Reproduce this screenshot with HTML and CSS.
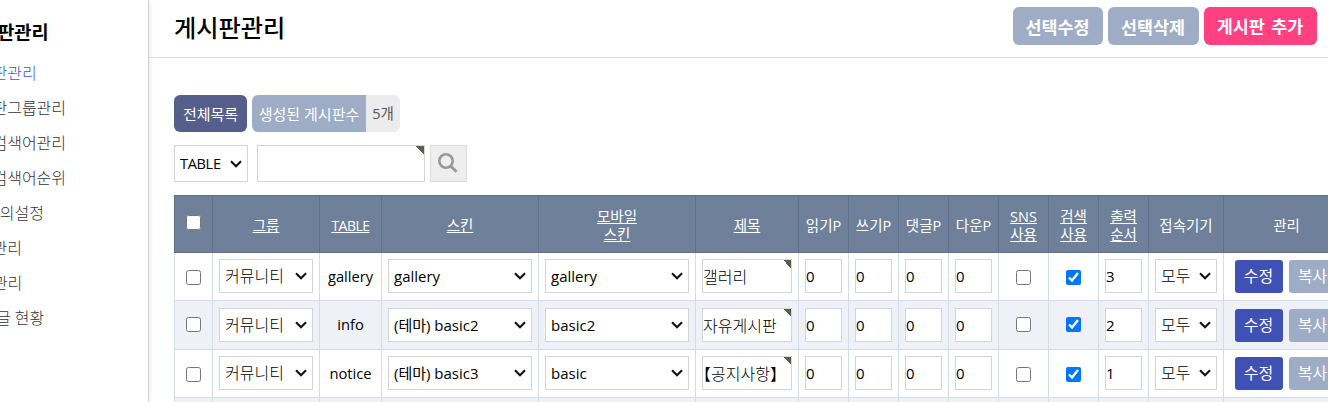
FILE: index.html
```
<!DOCTYPE html>
<html lang="ko">
<head>
  <meta charset="UTF-8">
  <title>게시판관리</title>
  <link rel="stylesheet" href="styles.css">
</head>
<body>

  <!-- Left menu -->
  <nav class="sidebar">
    <h2>게시판관리</h2>
    <ul>
      <li class="on">게시판관리</li>
      <li>게시판그룹관리</li>
      <li>인기검색어관리</li>
      <li>인기검색어순위</li>
      <li>1:1문의설정</li>
      <li>내용관리</li>
      <li>FAQ관리</li>
      <li>글,댓글 현황</li>
    </ul>
  </nav>

  <main class="content">
    <header class="top">
      <h1>게시판관리</h1>
      <div class="top-btns">
        <button class="btn edit">선택수정</button>
        <button class="btn delete">선택삭제</button>
        <button class="btn add">게시판 추가</button>
      </div>
    </header>

    <div class="overview">
      <a class="list-all">전체목록</a>
      <span class="count"><span class="count-txt">생성된 게시판수</span><span class="count-num">5개</span></span>
    </div>

    <form class="search">
      <select class="field"><option>TABLE</option></select>
      <input type="text" class="keyword required">
      <button type="button" class="search-btn">
        <svg width="20" height="20" viewBox="0 0 20 20" fill="none" stroke="#999">
          <circle cx="8" cy="8" r="6.7" stroke-width="2.6"/>
          <path d="M12.8 13.2L18.5 18.8" stroke-width="3"/>
        </svg>
      </button>
    </form>

    <table>
      <colgroup>
        <col class="w-chk"><col class="w-group"><col class="w-table"><col class="w-skin"><col class="w-skin"><col class="w-title">
        <col class="w-num"><col class="w-num"><col class="w-num"><col class="w-num"><col class="w-num"><col class="w-num"><col class="w-num">
        <col class="w-device"><col class="w-mng">
      </colgroup>
      <thead>
        <tr>
          <th class="th-chk"><input type="checkbox"></th>
          <th><u>그룹</u></th>
          <th class="en"><u>TABLE</u></th>
          <th><u>스킨</u></th>
          <th><u>모바일<br>스킨</u></th>
          <th><u>제목</u></th>
          <th>읽기P</th>
          <th>쓰기P</th>
          <th>댓글P</th>
          <th>다운P</th>
          <th><u>SNS<br>사용</u></th>
          <th><u>검색<br>사용</u></th>
          <th><u>출력<br>순서</u></th>
          <th>접속기기</th>
          <th>관리</th>
        </tr>
      </thead>
      <tbody>
        <tr>
          <td class="chk"><input type="checkbox"></td>
          <td><select><option>커뮤니티</option></select></td>
          <td class="name">gallery</td>
          <td><select class="en"><option>gallery</option></select></td>
          <td><select class="en"><option>gallery</option></select></td>
          <td><input type="text" class="required" value="갤러리"></td>
          <td><input type="text" value="0"></td>
          <td><input type="text" value="0"></td>
          <td><input type="text" value="0"></td>
          <td><input type="text" value="0"></td>
          <td class="chk"><input type="checkbox"></td>
          <td class="chk"><input type="checkbox" checked></td>
          <td><input type="text" value="3"></td>
          <td><select><option>모두</option></select></td>
          <td><div class="mng"><a class="modify">수정</a><a class="copy">복사</a></div></td>
        </tr>
        <tr>
          <td class="chk"><input type="checkbox"></td>
          <td><select><option>커뮤니티</option></select></td>
          <td class="name">info</td>
          <td><select class="en"><option>(테마) basic2</option></select></td>
          <td><select class="en"><option>basic2</option></select></td>
          <td><input type="text" class="required" value="자유게시판"></td>
          <td><input type="text" value="0"></td>
          <td><input type="text" value="0"></td>
          <td><input type="text" value="0"></td>
          <td><input type="text" value="0"></td>
          <td class="chk"><input type="checkbox"></td>
          <td class="chk"><input type="checkbox" checked></td>
          <td><input type="text" value="2"></td>
          <td><select><option>모두</option></select></td>
          <td><div class="mng"><a class="modify">수정</a><a class="copy">복사</a></div></td>
        </tr>
        <tr>
          <td class="chk"><input type="checkbox"></td>
          <td><select><option>커뮤니티</option></select></td>
          <td class="name">notice</td>
          <td><select class="en"><option>(테마) basic3</option></select></td>
          <td><select class="en"><option>basic</option></select></td>
          <td><input type="text" class="required" value="【공지사항】"></td>
          <td><input type="text" value="0"></td>
          <td><input type="text" value="0"></td>
          <td><input type="text" value="0"></td>
          <td><input type="text" value="0"></td>
          <td class="chk"><input type="checkbox"></td>
          <td class="chk"><input type="checkbox" checked></td>
          <td><input type="text" value="1"></td>
          <td><select><option>모두</option></select></td>
          <td><div class="mng"><a class="modify">수정</a><a class="copy">복사</a></div></td>
        </tr>
        <tr>
          <td></td><td></td><td></td><td></td><td></td><td></td><td></td><td></td>
          <td></td><td></td><td></td><td></td><td></td><td></td><td></td>
        </tr>
      </tbody>
    </table>
  </main>

</body>
</html>
```
FILE: styles.css
```
* {
  box-sizing: border-box;
}

body {
  margin: 0;
  height: 402px;
  display: flex;
  overflow: hidden;
  background: #fff;
  color: #000;
  font-family: "Open Sans", "Noto Sans CJK KR", sans-serif;
  font-size: 15px;
}

input,
select,
button {
  font-family: inherit;
}

/* left menu */
.sidebar {
  flex: none;
  width: 149px;
  border-right: 1px solid #d5d5d5;
  box-shadow: 0 0 5px rgba(0, 0, 0, 0.12);
  white-space: nowrap;
}

.sidebar h2 {
  margin: 19px 0 11px -37px;
  font-size: 18.6px;
  line-height: 26px;
}

.sidebar ul {
  margin: 0 0 0 -37px;
  padding: 0;
  list-style: none;
}

.sidebar li {
  height: 35px;
  line-height: 35px;
  font-size: 16px;
  font-weight: 300;
  color: #333;
}

.sidebar .on {
  color: #3f51f5;
}

/* top bar */
.content {
  flex: 1;
  min-width: 0;
  height: 402px;
  overflow: hidden;
}

.top {
  display: flex;
  justify-content: space-between;
  align-items: flex-start;
  height: 58px;
  padding: 7px 11px 0 25px;
  border-bottom: 1px solid #ddd;
}

.top h1 {
  margin: 0;
  font-size: 24.2px;
  font-weight: 500;
  line-height: 42px;
}

.top-btns {
  display: flex;
  gap: 5px;
}

.btn {
  height: 38px;
  padding: 0 1px 0 0;
  border: 0;
  border-radius: 6px;
  background: #9eacc6;
  color: #fff;
  font-size: 17.4px;
  font-weight: bold;
}

.edit {
  width: 90px;
}

.delete {
  width: 91px;
}

.add {
  width: 113px;
  padding-bottom: 1px;
  background: #ff4081;
  word-spacing: 2px;
}

/* list summary */
.overview {
  display: flex;
  gap: 5px;
  margin: 37px 0 0 25px;
  height: 37px;
  line-height: 38px;
  text-align: center;
  color: #fff;
}

.list-all {
  width: 73px;
  border-radius: 6px;
  background: #565e8b;
}

.count {
  display: flex;
  border-radius: 6px;
  overflow: hidden;
}

.count-txt {
  width: 114px;
  background: #9eacc6;
}

.count-num {
  width: 34px;
  background: #ececec;
  color: #555;
  font-size: 14.5px;
}

/* form parts */
select {
  width: 100%;
  height: 34px;
  padding: 0 0 0 5px;
  border: 1px solid #d5d5d5;
  border-radius: 0;
  appearance: none;
  background: #fff url("data:image/svg+xml,%3Csvg xmlns='http://www.w3.org/2000/svg' width='12' height='8' fill='none' stroke='%23111' stroke-width='2.1'%3E%3Cpath d='M1 1.2l5 5 5-5'/%3E%3C/svg%3E") no-repeat right 5px center;
  color: #000;
  font-size: 16px;
  font-weight: 300;
}

select.en {
  font-size: 15px;
  font-weight: normal;
}

input[type="text"] {
  display: block;
  width: 100%;
  height: 34px;
  padding: 0;
  border: 1px solid #d5d5d5;
  border-radius: 0;
  background-color: #fff;
  color: #000;
  font-size: 15px;
}

input[type="text"].required {
  background: #fff linear-gradient(to top right, #fff 50%, #5c5e4a 50%) no-repeat right top / 8px 8px;
  font-size: 16px;
  font-weight: 300;
  font-feature-settings: "halt";
}

input[type="checkbox"] {
  display: block;
  width: 15px;
  height: 15px;
  margin: 2px auto 0;
}

/* search form */
.search {
  display: flex;
  margin: 13px 0 13px 25px;
  height: 37px;
}

.search .field {
  flex: none;
  width: 74px;
  height: 37px;
  margin-right: 9px;
  font-size: 14.5px;
  font-weight: normal;
  letter-spacing: -0.3px;
}

.search input[type="text"] {
  flex: none;
  width: 168px;
  height: 37px;
  margin-right: 5px;
}

.search-btn {
  width: 37px;
  padding: 0;
  border: 1px solid #ddd;
  background: #eee;
}

.search-btn svg {
  display: block;
  margin: -2px 0 0 7px;
}

/* board table */
table {
  width: 1176px;
  margin-left: 25px;
  table-layout: fixed;
  border-collapse: collapse;
}

.w-chk { width: 38px; }
.w-group { width: 107px; }
.w-table { width: 62px; }
.w-skin { width: 157px; }
.w-title { width: 103px; }
.w-num { width: 50px; }
.w-device { width: 75px; }
.w-mng { width: 126px; }

th {
  height: 57px;
  padding: 3px 0 0;
  border: 1px solid #60718b;
  background: #6f809a;
  color: #fff;
  font-size: 14.5px;
  font-weight: normal;
  line-height: 18px;
}

th.en {
  font-size: 14px;
  letter-spacing: -0.5px;
}

th.th-chk {
  padding-right: 1px;
}

.th-chk input[type="checkbox"] {
  margin-top: -6px;
}

td {
  height: 48px;
  padding: 6px 6px 7px;
  border: 1px solid #d6dce7;
}

tbody tr:nth-child(even) td {
  height: 49px;
  padding-top: 7px;
  background: #eff1f9;
}

tbody td.chk,
tbody tr:nth-child(even) td.chk {
  padding: 4px 7px 5px 6px;
}

tbody tr:nth-child(even) td.chk {
  padding-bottom: 7px;
}

td select {
  display: block;
}

tbody td.name,
tbody tr:nth-child(even) td.name {
  padding: 0 0 2px;
  text-align: center;
  font-size: 14.7px;
}

.mng {
  display: flex;
  justify-content: center;
  gap: 6px;
  margin: 0 1px 0 -1px;
}

.mng a {
  width: 48px;
  height: 33px;
  margin-top: 1px;
  border-radius: 3px;
  color: #fff;
  font-size: 16px;
  line-height: 33px;
  text-align: center;
}

.modify {
  background: #3f51b5;
}

.copy {
  background: #9eacc6;
}
```
